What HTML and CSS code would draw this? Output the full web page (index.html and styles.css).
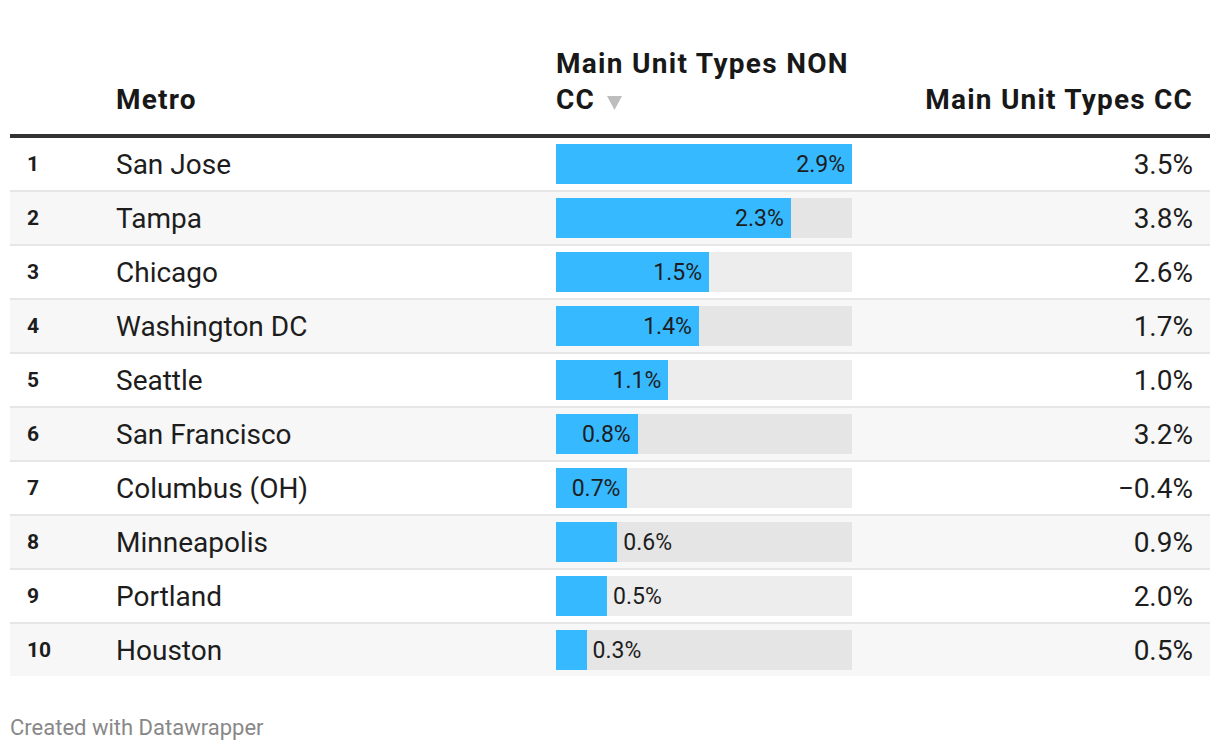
FILE: index.html
```html
<!DOCTYPE html>
<html>
<head>
<meta charset="utf-8">
<link rel="stylesheet" href="styles.css">
</head>
<body>
<div class="chart">
  <div class="thead">
    <div class="th th-rank"></div>
    <div class="th th-metro">Metro</div>
    <div class="th th-bar">Main Unit Types NON CC<svg class="sort" width="15" height="15" viewBox="0 0 15 15"><path d="M0 1 H15 L7.5 15 Z" fill="#bdbdbd"/></svg></div>
    <div class="th th-cc">Main Unit Types CC</div>
  </div>
  <div class="tbody">
    <div class="row"><div class="rank">1</div><div class="metro">San Jose</div><div class="barcell"><div class="track"><div class="fill in" style="width:100%"><span class="val">2.9%</span></div></div></div><div class="cc">3.5%</div></div>
    <div class="row shade"><div class="rank">2</div><div class="metro">Tampa</div><div class="barcell"><div class="track"><div class="fill in" style="width:79.31%"><span class="val">2.3%</span></div></div></div><div class="cc">3.8%</div></div>
    <div class="row"><div class="rank">3</div><div class="metro">Chicago</div><div class="barcell"><div class="track"><div class="fill in" style="width:51.72%"><span class="val">1.5%</span></div></div></div><div class="cc">2.6%</div></div>
    <div class="row shade"><div class="rank">4</div><div class="metro">Washington DC</div><div class="barcell"><div class="track"><div class="fill in" style="width:48.28%"><span class="val">1.4%</span></div></div></div><div class="cc">1.7%</div></div>
    <div class="row"><div class="rank">5</div><div class="metro">Seattle</div><div class="barcell"><div class="track"><div class="fill in" style="width:37.93%"><span class="val">1.1%</span></div></div></div><div class="cc">1.0%</div></div>
    <div class="row shade"><div class="rank">6</div><div class="metro">San Francisco</div><div class="barcell"><div class="track"><div class="fill in" style="width:27.59%"><span class="val">0.8%</span></div></div></div><div class="cc">3.2%</div></div>
    <div class="row"><div class="rank">7</div><div class="metro">Columbus (OH)</div><div class="barcell"><div class="track"><div class="fill in" style="width:24.14%"><span class="val">0.7%</span></div></div></div><div class="cc">−0.4%</div></div>
    <div class="row shade"><div class="rank">8</div><div class="metro">Minneapolis</div><div class="barcell"><div class="track"><div class="fill" style="width:20.69%"></div><span class="val out">0.6%</span></div></div><div class="cc">0.9%</div></div>
    <div class="row"><div class="rank">9</div><div class="metro">Portland</div><div class="barcell"><div class="track"><div class="fill" style="width:17.24%"></div><span class="val out">0.5%</span></div></div><div class="cc">2.0%</div></div>
    <div class="row shade last"><div class="rank">10</div><div class="metro">Houston</div><div class="barcell"><div class="track"><div class="fill" style="width:10.34%"></div><span class="val out">0.3%</span></div></div><div class="cc">0.5%</div></div>
  </div>
  <div class="footer">Created with Datawrapper</div>
</div>
</body>
</html>
```
FILE: styles.css
```css
html, body {
  margin: 0;
  padding: 0;
  background: #fff;
}
body {
  font-family: Roboto, "Liberation Sans", sans-serif;
  color: #1d1d1d;
}
.chart {
  padding: 46px 10px 0 10px;
}
.thead {
  display: grid;
  grid-template-columns: 106px 440px 296px 1fr;
  align-items: end;
  border-bottom: 4px solid #333;
  padding-bottom: 16px;
}
.th {
  font-weight: 700;
  font-size: 28px;
  letter-spacing: 1.2px;
  line-height: 36px;
  color: #181818;
}
.th-bar {
  letter-spacing: 1.3px;
  margin-right: -20px;
}
.sort {
  margin-left: 12px;
  vertical-align: -1px;
}
.th-cc {
  text-align: right;
  padding-right: 17px;
}
.row {
  display: grid;
  grid-template-columns: 106px 440px 296px 1fr;
  align-items: center;
  height: 52px;
  border-bottom: 2px solid #e6e6e6;
}
.row.shade {
  background: #f7f7f7;
}
.row.last {
  border-bottom: none;
}
.rank {
  padding-left: 17px;
  font-weight: 700;
  font-size: 21px;
}
.metro {
  font-size: 28px;
}
.cc {
  font-size: 28px;
  text-align: right;
  padding-right: 17px;
}
.track {
  display: flex;
  align-items: center;
  height: 40px;
  background: rgba(0, 0, 0, 0.07);
}
.fill {
  height: 40px;
  background: #36b9ff;
  display: flex;
  align-items: center;
  justify-content: flex-end;
}
.val {
  font-size: 23px;
  padding-right: 7px;
  color: #1d1d1d;
}
.val.out {
  padding-right: 0;
  padding-left: 6px;
}
.footer {
  margin-top: 39px;
  font-size: 22px;
  color: #888;
}
```
